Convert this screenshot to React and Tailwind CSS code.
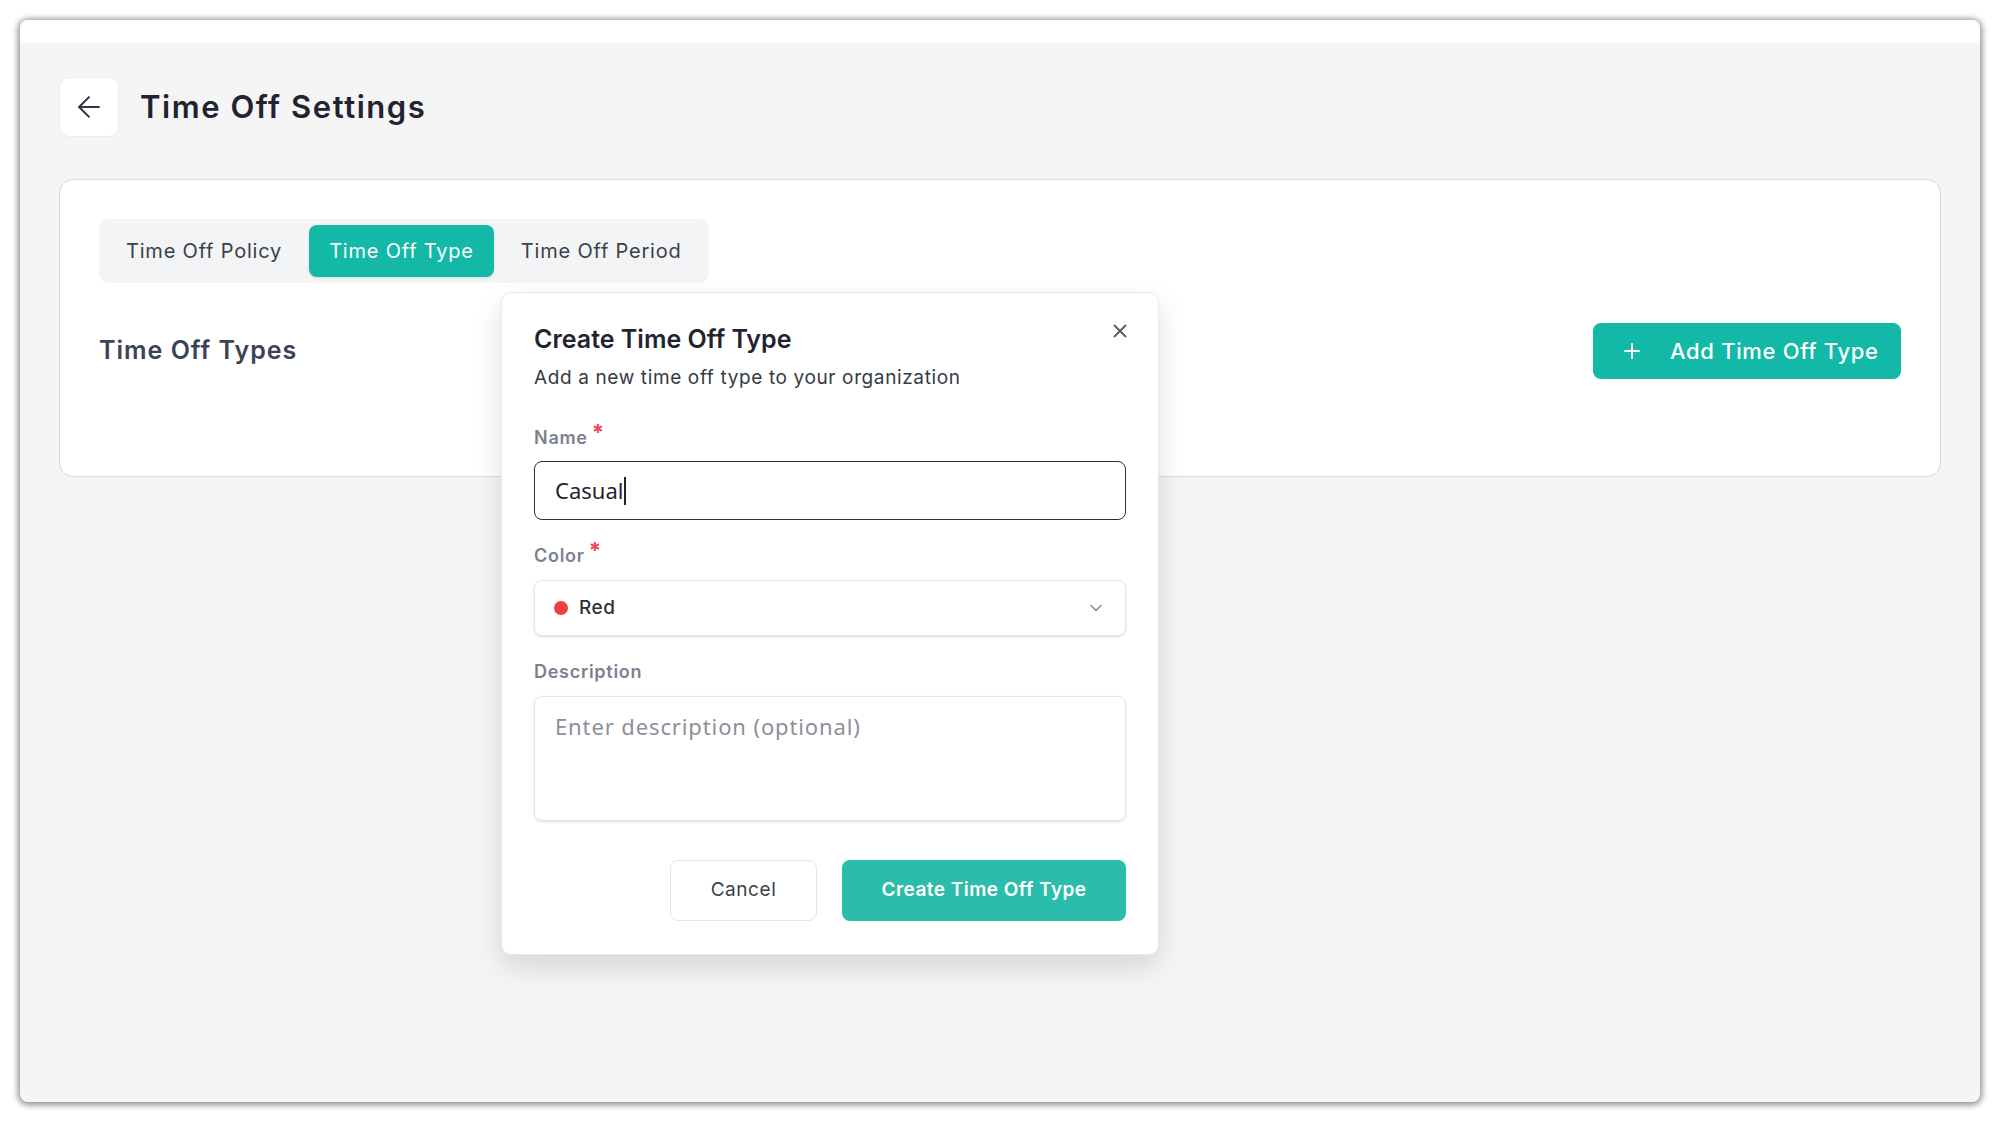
import React from 'react';
import { ArrowLeft, Plus, X, ChevronDown } from 'lucide-react';

function Label({ text, required }) {
    return (
        <div className="flex items-start h-[24px] text-[18px] leading-[24px] font-semibold tracking-[0.04em] text-[#7b8190]">
            {text}
            {required && <span className="ml-[4px] -mt-[6px] text-[22px] font-bold text-[#f0445a]">*</span>}
        </div>
    );
}

export default function App() {
    return (
        <div className="w-[2000px] h-[1122px] bg-white p-[20px] font-[Inter,sans-serif]">
            <div className="relative h-full rounded-[8px] bg-[#f5f5f6] shadow-[0_1px_6px_2px_rgba(0,0,0,0.45)] overflow-hidden flex flex-col">
                <div className="h-[23px] bg-white" />

                <div className="px-[39px] pt-[34px]">
                    {/* header */}
                    <div className="flex items-center gap-[21px] h-[60px]">
                        <button className="w-[60px] h-[60px] rounded-[10px] bg-white border border-[#ececee] flex items-center justify-center">
                            <ArrowLeft size={34} strokeWidth={1.4} className="text-[#2f3542]" />
                        </button>
                        <h1 className="text-[31px] font-semibold tracking-[0.05em] text-[#1f2430]">Time Off Settings</h1>
                    </div>

                    {/* card */}
                    <div className="mt-[42px] bg-white border border-[#d8d8ee] rounded-[14px] p-[39px]">
                        <div className="inline-flex gap-[6px] p-[6px] rounded-[10px] bg-[#f3f4f5]">
                            <button className="h-[52px] px-[21px] rounded-[8px] text-[20px] tracking-[0.04em] text-[#3a3f4a]">Time Off Policy</button>
                            <button className="h-[52px] px-[20px] rounded-[8px] text-[20px] tracking-[0.04em] text-white bg-[#13b9a6] shadow-sm">Time Off Type</button>
                            <button className="h-[52px] px-[21px] rounded-[8px] text-[20px] tracking-[0.04em] text-[#3a3f4a]">Time Off Period</button>
                        </div>

                        <div className="mt-[40px] flex items-center justify-between h-[56px]">
                            <h2 className="text-[25px] font-semibold tracking-[0.04em] text-[#3b4456]">Time Off Types</h2>
                            <button className="h-[56px] w-[308px] rounded-[8px] bg-[#12b9a6] text-white text-[22px] font-medium tracking-[0.03em] flex items-center pl-[27px] gap-[26px]">
                                <Plus size={24} strokeWidth={2} />
                                Add Time Off Type
                            </button>
                        </div>
                        <div className="h-[58px]" />
                    </div>
                </div>

                {/* modal */}
                <div className="absolute left-[481px] top-[272px] w-[658px] rounded-[10px] bg-white border border-[#e8e9ec] shadow-[0_12px_28px_rgba(0,0,0,0.13)] px-[32px] pt-[30px] pb-[33px]">
                    <button className="absolute right-[27px] top-[27px] text-[#555a63]">
                        <X size={22} strokeWidth={2} />
                    </button>
                    <h3 className="text-[25px] leading-[32px] font-semibold text-[#1f2430]">Create Time Off Type</h3>
                    <p className="mt-[10px] text-[19px] leading-[26px] tracking-[0.033em] text-[#353a44]">Add a new time off type to your organization</p>

                    <div className="mt-[35px]">
                        <Label text="Name" required />
                        <div className="mt-[11px] h-[59px] rounded-[8px] border-[1.5px] border-[#2b2e33] flex items-center px-[20px] font-['Noto_Sans',sans-serif] text-[22px] text-[#1f2430]">
                            Casual
                            <span className="ml-[1px] w-[1.5px] h-[28px] bg-[#1f2430]" />
                        </div>
                    </div>

                    <div className="mt-[24px]">
                        <Label text="Color" required />
                        <div className="mt-[12px] h-[56px] rounded-[8px] border border-[#e3e5e8] shadow-sm flex items-center px-[19px]">
                            <span className="w-[14px] h-[14px] rounded-full bg-[#ee4040]" />
                            <span className="ml-[11px] text-[19px] font-medium tracking-[0.03em] text-[#2d3138]">Red</span>
                            <ChevronDown size={20} strokeWidth={1.5} className="ml-auto text-[#7b8190]" />
                        </div>
                    </div>

                    <div className="mt-[24px]">
                        <Label text="Description" />
                        <div className="mt-[12px] h-[125px] rounded-[8px] border border-[#e3e5e8] shadow-sm px-[20px] pt-[13px] font-['Noto_Sans',sans-serif] text-[22px] tracking-[0.04em] text-[#8c9099]">
                            Enter description (optional)
                        </div>
                    </div>

                    <div className="mt-[39px] flex justify-end gap-[25px]">
                        <button className="h-[61px] w-[147px] rounded-[8px] border border-[#e3e5e8] bg-white text-[19px] tracking-[0.03em] text-[#3a3f4a]">Cancel</button>
                        <button className="h-[61px] w-[284px] rounded-[8px] bg-[#2bbdab] text-[19px] font-semibold tracking-[0.025em] text-white">Create Time Off Type</button>
                    </div>
                </div>
            </div>
        </div>
    );
}
